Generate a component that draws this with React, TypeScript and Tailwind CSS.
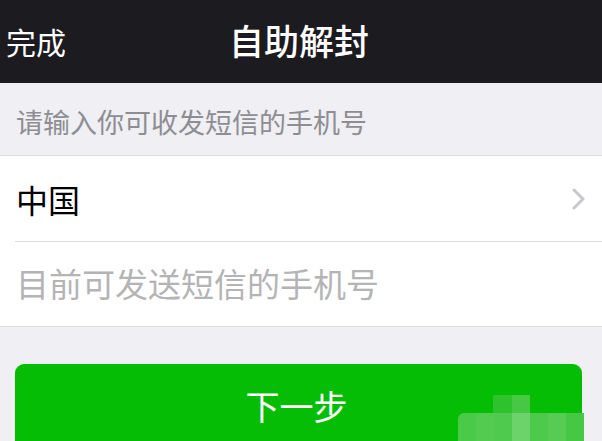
import React from "react";

const font = { fontFamily: '"Noto Sans CJK SC", "Noto Sans", sans-serif' };

export default function App() {
  const row2 = ["#4bc949", "#52cb50", "#50ca4e", "#6bd369", "#4dc94b", "#57cc55", "#47c845"];
  return (
    <div className="relative w-[602px] h-[441px] overflow-hidden bg-[#efeff4]" style={font}>
      <div className="h-[83px] bg-[#1c1b20] relative flex items-center">
        <span className="pl-[6px] pb-[2px] text-[30px] text-white leading-none">完成</span>
        <span className="absolute left-0 right-0 text-center text-[35px] text-white leading-none font-medium pr-[4px] pb-[4px]">
          自助解封
        </span>
      </div>
      <div className="h-[72px] flex items-center pl-[16px] pt-[4px] text-[27px] text-[#8d8d92] leading-none">
        请输入你可收发短信的手机号
      </div>
      <div className="bg-white border-t border-b border-[#dcdcdf]">
        <div className="h-[85px] flex items-center justify-between pl-[16px] pr-[16px]">
          <span className="text-[32px] text-black leading-none">中国</span>
          <svg width="14" height="22" viewBox="0 0 14 22">
            <path d="M2 2 L11 11 L2 20" fill="none" stroke="#c7c7cc" strokeWidth="3" strokeLinecap="round" strokeLinejoin="round" />
          </svg>
        </div>
        <div className="ml-[15px] h-px bg-[#dcdcdf]" />
        <div className="h-[84px] flex items-center pl-[16px] pb-[2px] text-[33px] text-[#b4b4b6] leading-none">
          目前可发送短信的手机号
        </div>
      </div>
      <div className="pl-[15px] pr-[20px] pt-[37px]">
        <div className="h-[100px] rounded-[9px] bg-[#06bd05] flex items-start justify-center pt-[25px] pr-[4px]">
          <span className="text-[34px] text-white leading-none">下一步</span>
        </div>
      </div>
      <div className="absolute left-[493px] top-[395px] flex">
        <div className="w-[19px] h-[18px] bg-[#2ec22c]" />
        <div className="w-[18px] h-[18px] bg-[#46c844]" />
      </div>
      <div className="absolute left-[458px] top-[413px] flex rounded-tl-[6px] overflow-hidden">
        {row2.map((c, i) => (
          <div key={i} className="w-[18px] h-[28px]" style={{ backgroundColor: c }} />
        ))}
      </div>
    </div>
  );
}
